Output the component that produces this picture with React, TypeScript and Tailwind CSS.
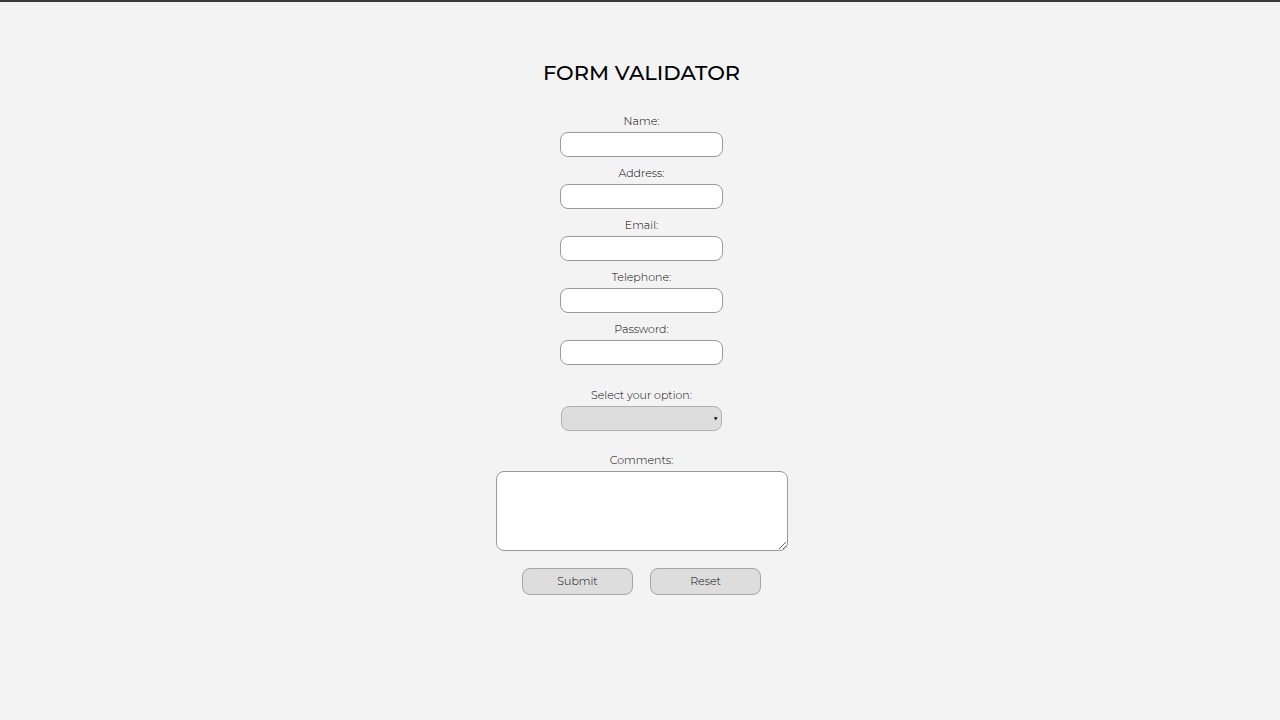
const fields = ['Name:', 'Address:', 'Email:', 'Telephone:', 'Password:'];

const labelCls = 'block h-[16px] mb-[3px] text-center text-[11px] leading-[16px] font-light text-black';
const inputCls =
  'block h-[25px] w-[163px] rounded-[8px] border border-[#9a9a9a] bg-white px-2 text-[12px] outline-none';
const btnCls =
  'h-[27px] w-[111px] rounded-[8px] border border-[#a6a6a6] bg-[#dddddd] pb-[1px] text-[11px] font-light text-black';

export default function App() {
  return (
    <div
      className="min-h-[720px] border-t-2 border-[#3a3a3a] bg-[#f3f3f3] pl-[3px]"
      style={{ fontFamily: 'Montserrat, "DejaVu Sans", sans-serif' }}
    >
      <div className="flex flex-col items-center">
        <h1 className="mt-[57px] h-[28px] text-[21px] leading-[28px] font-medium text-black">FORM VALIDATOR</h1>

        <form className="mt-[26px] flex flex-col items-center" onSubmit={(e) => e.preventDefault()}>
          {fields.map((f) => (
            <div key={f} className="mb-[8px] flex flex-col items-center">
              <label className={labelCls}>{f}</label>
              <input type={f === 'Password:' ? 'password' : 'text'} className={inputCls} />
            </div>
          ))}

          <div className="mt-[14px] flex flex-col items-center">
            <label className={labelCls}>Select your option:</label>
            <div className="relative">
              <select className="block h-[25px] w-[161px] appearance-none rounded-[8px] border border-[#b0b0b0] bg-[#dddddd] text-[12px] outline-none">
                <option></option>
              </select>
              <span className="pointer-events-none absolute top-[6px] right-[4px] text-[8px] leading-[12px] text-black">▼</span>
            </div>
          </div>

          <div className="mt-[21px] flex flex-col items-center">
            <label className={labelCls}>Comments:</label>
            <textarea className="block h-[80px] w-[292px] rounded-[8px] border border-[#9a9a9a] bg-white p-1 text-[12px] outline-none" />
          </div>

          <div className="mt-[17px] flex gap-[17px]">
            <button type="submit" className={btnCls}>
              Submit
            </button>
            <button type="reset" className={btnCls}>
              Reset
            </button>
          </div>
        </form>
      </div>
    </div>
  );
}
